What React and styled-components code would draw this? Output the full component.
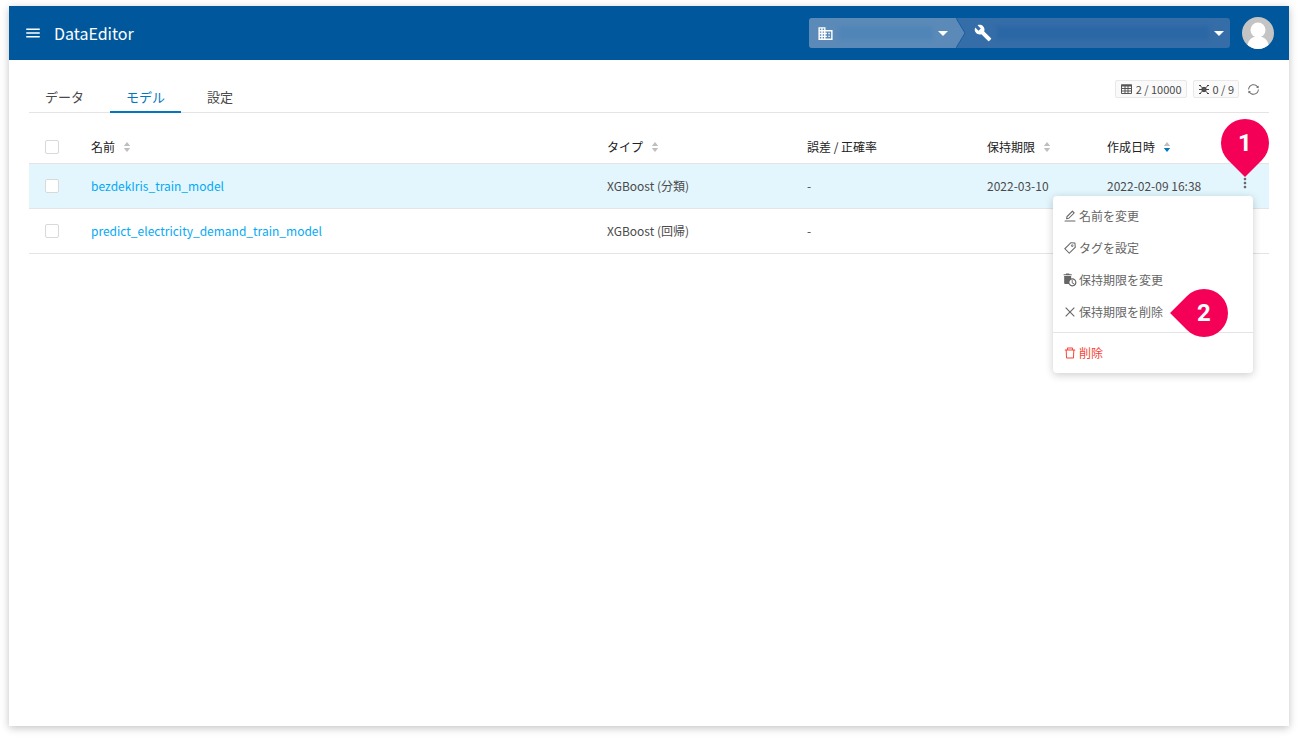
import { useState } from "react";
import styled, { createGlobalStyle } from "styled-components";
import {
  AiOutlineClose,
  AiOutlineDelete,
  AiOutlineEdit,
  AiOutlineSync,
  AiOutlineTag,
} from "react-icons/ai";
import { MdAutoDelete, MdBuild, MdBusiness, MdMenu, MdMoreVert } from "react-icons/md";

const colors = {
  header: "#01579b",
  primary: "#0277bd",
  link: "#03a9f4",
  text: "#4a4a4a",
  heading: "#212121",
  border: "#e4e4e4",
  danger: "#f44336",
  marker: "#f50057",
};

const GlobalStyle = createGlobalStyle`
  * {
    box-sizing: border-box;
  }
  body {
    margin: 0;
    background: #fff;
    color: ${colors.text};
    font-family: "Noto Sans CJK JP", sans-serif;
    font-size: 12px;
    line-height: 20px;
  }
  button {
    padding: 0;
    border: 0;
    background: none;
    color: inherit;
    font: inherit;
    cursor: pointer;
  }
`;

const Page = styled.div`
  display: flex;
  flex-direction: column;
  min-height: calc(100vh - 18px);
  margin: 6px 9px 12px;
  background: #fff;
  box-shadow: 0 2px 8px rgba(0, 0, 0, 0.24);
`;

const Header = styled.header`
  display: flex;
  align-items: center;
  height: 54px;
  padding: 0 15px;
  background: ${colors.header};
  color: #fff;
`;

const MenuButton = styled.button`
  display: flex;
  font-size: 18px;
`;

const Title = styled.h1`
  flex: 1;
  margin: 0 12px;
  font-size: 16px;
  font-weight: 400;
  line-height: 24px;
`;

const Breadcrumb = styled.nav`
  display: flex;
  height: 30px;
  margin-right: 12px;
  border-radius: 3px;
  background: #356da8;
  overflow: hidden;
`;

const Crumb = styled.button`
  display: flex;
  align-items: center;
  width: ${({ $width }) => $width}px;
  padding: 0 ${({ $end }) => $end}px 0 8px;
  background: ${({ $active }) => ($active ? "#5b8ab9" : "transparent")};
  gap: 5px;
`;

const CrumbName = styled.span`
  flex: 1;
  height: 14px;
  background: ${({ $active }) => ($active ? "#5085b7" : "#2b67a5")};
  filter: blur(2px);
`;

const Avatar = styled.button`
  display: flex;
  border-radius: 50%;
  overflow: hidden;
`;

const Content = styled.main`
  padding: 20px;
`;

const Toolbar = styled.div`
  display: flex;
  justify-content: space-between;
  height: 33px;
  border-bottom: 1px solid ${colors.border};
`;

const Tabs = styled.div`
  display: flex;
  gap: 10px;
`;

const Tab = styled.button`
  height: 33px;
  padding: 2px 16px 0;
  border-bottom: 2px solid ${({ $active }) => ($active ? colors.primary : "transparent")};
  color: ${({ $active }) => ($active ? colors.primary : colors.text)};
  font-size: 13px;
`;

const Counters = styled.div`
  display: flex;
  align-items: center;
  height: 18px;
  padding-right: 9px;
  gap: 6px;
`;

const Counter = styled.span`
  display: flex;
  align-items: center;
  height: 18px;
  padding: 0 4px 0 5px;
  border: 1px solid #e8e8e8;
  border-radius: 2px;
  background: #fafafa;
  font-size: 11px;
  gap: 4px;
`;

const RefreshButton = styled.button`
  display: flex;
  margin-left: 2px;
  color: #666;
  font-size: 13px;
`;

const Table = styled.table`
  width: 100%;
  margin-top: 18px;
  border-collapse: collapse;
  table-layout: fixed;
`;

const HeadCell = styled.th`
  width: ${({ $width }) => ($width ? `${$width}px` : "auto")};
  height: 32px;
  padding: 0 8px;
  border-bottom: 1px solid ${colors.border};
  color: ${colors.heading};
  font-weight: 400;
  text-align: left;
`;

const Row = styled.tr`
  background: ${({ $selected }) => ($selected ? "#e3f6fd" : "#fff")};
`;

const Cell = styled.td`
  position: relative;
  height: 45px;
  padding: 0 8px;
  border-bottom: 1px solid ${colors.border};
`;

const ActionCell = styled(Cell)`
  padding: 0 0 6px 2px;
`;

const Checkbox = styled.input`
  display: block;
  width: 14px;
  height: 14px;
  margin: 0 8px;
  border: 1px solid #d9d9d9;
  border-radius: 2px;
  background: #fff;
  appearance: none;
`;

const SortButton = styled.button`
  display: flex;
  align-items: center;
  gap: 8px;
`;

const ModelLink = styled.a`
  color: ${colors.link};
  text-decoration: none;
`;

const MoreButton = styled.button`
  display: flex;
  margin: 0 auto;
  color: #666;
  font-size: 16px;
`;

const Menu = styled.div`
  position: absolute;
  top: 32px;
  right: 16px;
  z-index: 1;
  width: 200px;
  padding: 4px 0;
  border-radius: 4px;
  background: #fff;
  box-shadow: 0 2px 8px rgba(0, 0, 0, 0.2);
`;

const MenuItem = styled.button`
  display: flex;
  align-items: center;
  width: 100%;
  height: 32px;
  padding: 0 10px;
  color: ${({ $danger }) => ($danger ? colors.danger : "#666")};
  gap: 2px;
  svg {
    font-size: 14px;
  }
`;

const MenuDivider = styled.hr`
  height: 1px;
  margin: 4px 0;
  border: 0;
  background: ${colors.border};
`;

const Marker = styled.span`
  position: absolute;
  z-index: 2;
  display: flex;
  align-items: center;
  justify-content: center;
  width: 48px;
  height: 48px;
  color: #fff;
  font-family: Roboto, sans-serif;
  font-size: 24px;
  font-weight: 700;
  &::before {
    content: "";
    position: absolute;
    inset: 0;
    z-index: -1;
    border-radius: 50% 50% 0 50%;
    background: ${colors.marker};
    transform: rotate(${({ $point }) => ($point === "down" ? 45 : 135)}deg);
  }
`;

const RowMarker = styled(Marker)`
  right: 0;
  bottom: 41px;
`;

const MenuMarker = styled(Marker)`
  top: 93px;
  right: 25px;
`;

const Caret = () => (
  <svg width="10" height="5" viewBox="0 0 10 5">
    <path d="M0 0h10L5 5z" fill="#fff" />
  </svg>
);

const CrumbArrow = () => (
  <svg width="10" height="30" viewBox="0 0 10 30">
    <path d="M0 0l9 15-9 15z" fill="#5b8ab9" />
    <path d="M0 0l9 15-9 15" fill="none" stroke="#165f9f" />
  </svg>
);

const SortIcon = ({ order }) => (
  <svg width="8" height="10" viewBox="0 0 8 10">
    <path d="M4 0l3.200 4H.8z" fill="#bfbfbf" />
    <path d="M4 10L.8 6h6.400z" fill={order === "desc" ? colors.primary : "#bfbfbf"} />
  </svg>
);

const TableIcon = () => (
  <svg width="11" height="11" viewBox="0 0 11 11" fill="none" stroke="#555">
    <path d="M.5 1h10v8.500H.5zM.5 4.500h10M.5 7h10M4 2v7.500M7 2v7.500" />
    <path d="M0 1.500h11" strokeWidth="2" />
  </svg>
);

const ModelIcon = () => (
  <svg width="10" height="11" viewBox="0 0 10 11" fill="none" stroke="#444">
    <path d="M1 1.500l8 8M9 1.500l-8 8M0 5.500h10" />
    <path d="M0 1.500h2M0 9.500h2M8 1.500h2M8 9.500h2" />
    <circle cx="5" cy="5.500" r="2.200" fill="#555" />
  </svg>
);

const columns = [
  { label: "名前", sortable: true },
  { label: "タイプ", width: 200, sortable: true },
  { label: "誤差 / 正確率", width: 180 },
  { label: "保持期限", width: 120, sortable: true },
  { label: "作成日時", width: 120, sortable: true, order: "desc" },
];

const models = [
  { name: "bezdekIris_train_model", type: "XGBoost (分類)", expires: "2022-03-10", created: "2022-02-09 16:38" },
  { name: "predict_electricity_demand_train_model", type: "XGBoost (回帰)", expires: "", created: "" },
];

const tabs = ["データ", "モデル", "設定"];

const RowMenu = () => (
  <Menu>
    <MenuItem><AiOutlineEdit />名前を変更</MenuItem>
    <MenuItem><AiOutlineTag />タグを設定</MenuItem>
    <MenuItem><MdAutoDelete />保持期限を変更</MenuItem>
    <MenuItem><AiOutlineClose />保持期限を削除</MenuItem>
    <MenuDivider />
    <MenuItem $danger><AiOutlineDelete />削除</MenuItem>
    <MenuMarker $point="left">2</MenuMarker>
  </Menu>
);

export default function App() {
  const [activeTab, setActiveTab] = useState("モデル");
  const [openRow, setOpenRow] = useState(0);

  return (
    <>
      <GlobalStyle />
      <Page>
        <Header>
          <MenuButton aria-label="メニュー"><MdMenu /></MenuButton>
          <Title>DataEditor</Title>
          <Breadcrumb>
            <Crumb $active $width={147} $end={8} aria-label="組織">
              <MdBusiness size={17} />
              <CrumbName $active />
              <Caret />
            </Crumb>
            <CrumbArrow />
            <Crumb $width={264} $end={6} aria-label="プロジェクト">
              <MdBuild size={18} />
              <CrumbName />
              <Caret />
            </Crumb>
          </Breadcrumb>
          <Avatar aria-label="アカウント">
            <svg width="32" height="32" viewBox="0 0 32 32">
              <path d="M0 0h32v32H0z" fill="#c4c4c4" />
              <circle cx="16" cy="13" r="7.500" fill="#fff" />
              <path d="M5 32c0-8 4-12.500 11-12.500S27 24 27 32z" fill="#fff" />
            </svg>
          </Avatar>
        </Header>
        <Content>
          <Toolbar>
            <Tabs>
              {tabs.map((tab) => (
                <Tab key={tab} $active={tab === activeTab} onClick={() => setActiveTab(tab)}>
                  {tab}
                </Tab>
              ))}
            </Tabs>
            <Counters>
              <Counter><TableIcon />2 / 10000</Counter>
              <Counter><ModelIcon />0 / 9</Counter>
              <RefreshButton aria-label="更新"><AiOutlineSync /></RefreshButton>
            </Counters>
          </Toolbar>
          <Table>
            <thead>
              <tr>
                <HeadCell $width={54}>
                  <Checkbox type="checkbox" aria-label="すべて選択" />
                </HeadCell>
                {columns.map(({ label, width, sortable, order }) => (
                  <HeadCell key={label} $width={width}>
                    {sortable ? <SortButton>{label}<SortIcon order={order} /></SortButton> : label}
                  </HeadCell>
                ))}
                <HeadCell $width={50} />
              </tr>
            </thead>
            <tbody>
              {models.map((model, i) => (
                <Row key={model.name} $selected={openRow === i}>
                  <Cell><Checkbox type="checkbox" aria-label={model.name} /></Cell>
                  <Cell><ModelLink href="#">{model.name}</ModelLink></Cell>
                  <Cell>{model.type}</Cell>
                  <Cell>-</Cell>
                  <Cell>{model.expires}</Cell>
                  <Cell>{model.created}</Cell>
                  <ActionCell>
                    <MoreButton aria-label="操作" onClick={() => setOpenRow(openRow === i ? -1 : i)}>
                      <MdMoreVert />
                    </MoreButton>
                    {openRow === i && <RowMenu />}
                    {i === 0 && <RowMarker $point="down">1</RowMarker>}
                  </ActionCell>
                </Row>
              ))}
            </tbody>
          </Table>
        </Content>
      </Page>
    </>
  );
}
